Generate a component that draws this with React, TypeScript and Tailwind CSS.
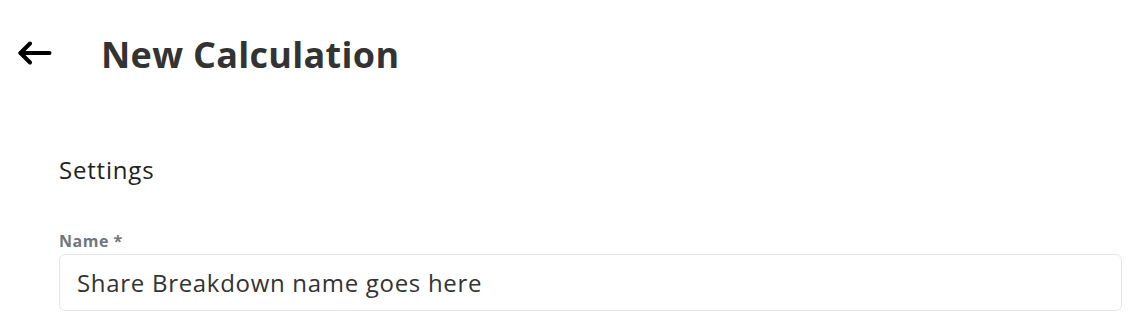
import React from 'react';

function BackArrow() {
  return (
    <svg width="34" height="24" viewBox="0 0 34 24" fill="none" stroke="#000" strokeWidth="4" strokeLinecap="round" strokeLinejoin="round">
      <path d="M2.5 12H31.5" />
      <path d="M12 2.5L2.5 12L12 21.5" />
    </svg>
  );
}

export default function App() {
  return (
    <div className="min-h-screen bg-white font-['Open_Sans',sans-serif]">
      <header className="flex items-center pl-[18px] pt-[33px]">
        <button className="-mt-[4px] flex items-center">
          <BackArrow />
        </button>
        <h1 className="ml-[49px] text-[36px] font-bold leading-[44px] tracking-[0.3px] text-[#333333]">New Calculation</h1>
      </header>
      <section className="pl-[59px] pr-[24px] pt-[77px]">
        <h2 className="text-[24px] leading-[32px] tracking-[0.8px] text-[#222222]">Settings</h2>
        <label className="mt-[44px] block text-[16px] font-bold leading-[22px] tracking-[0.5px] text-[#6f7680]">Name *</label>
        <div className="mt-[2px] flex h-[57px] items-center rounded-[6px] border border-[#e6e6e6] px-[17px]">
          <span className="text-[24px] tracking-[0.7px] text-[#333333]">Share Breakdown name goes here</span>
        </div>
      </section>
    </div>
  );
}
